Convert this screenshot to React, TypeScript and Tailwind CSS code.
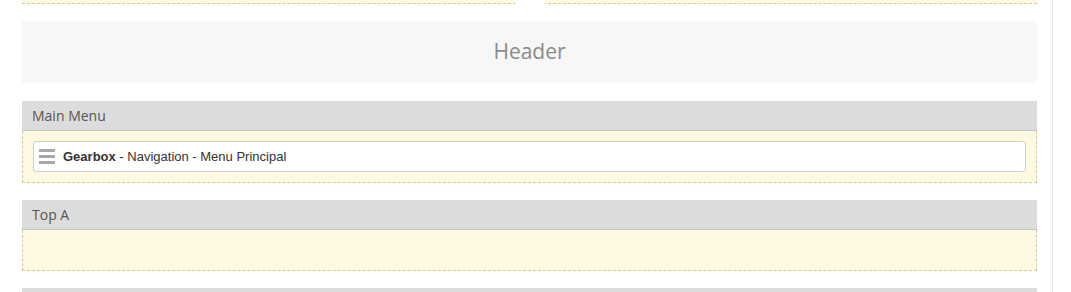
import React from 'react';

const Section = ({ title, children, bodyHeight }: { title: string; children?: React.ReactNode; bodyHeight: string }) => (
  <div>
    <div className="h-[30px] bg-[#dcdcdc] border-b border-[#c4c4c4] pl-[10px] flex items-center text-[14px] text-[#555] font-['Open_Sans',sans-serif]">
      {title}
    </div>
    <div className={`${bodyHeight} bg-[#fef9e1] border border-t-0 border-dashed border-[#d2caa0] px-[10px] pt-[10px]`}>
      {children}
    </div>
  </div>
);

export default function App() {
  return (
    <div className="flex w-[1071px] h-[292px] overflow-hidden bg-white">
      <div className="w-[1052px] pl-[22px] pr-[15px] relative">
        <div className="h-[4px] bg-[#fef9e1] border-b border-dashed border-[#d2caa0]" />
        <div className="absolute top-0 left-[515px] w-[30px] h-[5px] bg-white" />
        <div className="mt-[17px] h-[62px] bg-[#f7f7f7] flex items-center justify-center text-[21px] text-[#8a8a8a] font-['Open_Sans',sans-serif]">
          Header
        </div>
        <div className="mt-[18px]">
          <Section title="Main Menu" bodyHeight="h-[52px]">
            <div className="h-[31px] bg-white border border-[#cfcfcf] rounded-[3px] flex items-center pl-[5px] text-[13px] text-[#333] font-['Liberation_Sans',Arial,sans-serif]">
              <div className="flex flex-col gap-[3px] w-[16px] mr-[8px]">
                <span className="h-[3px] bg-[#a8a8a8]" />
                <span className="h-[3px] bg-[#a8a8a8]" />
                <span className="h-[3px] bg-[#a8a8a8]" />
              </div>
              <span className="font-bold">Gearbox</span>
              <span>&nbsp;- Navigation - Menu Principal</span>
            </div>
          </Section>
        </div>
        <div className="mt-[17px]">
          <Section title="Top A" bodyHeight="h-[41px]" />
        </div>
        <div className="mt-[17px] h-[30px] bg-[#dcdcdc]" />
      </div>
      <div className="w-px bg-[#e6e6e6]" />
      <div className="flex-1" />
    </div>
  );
}
